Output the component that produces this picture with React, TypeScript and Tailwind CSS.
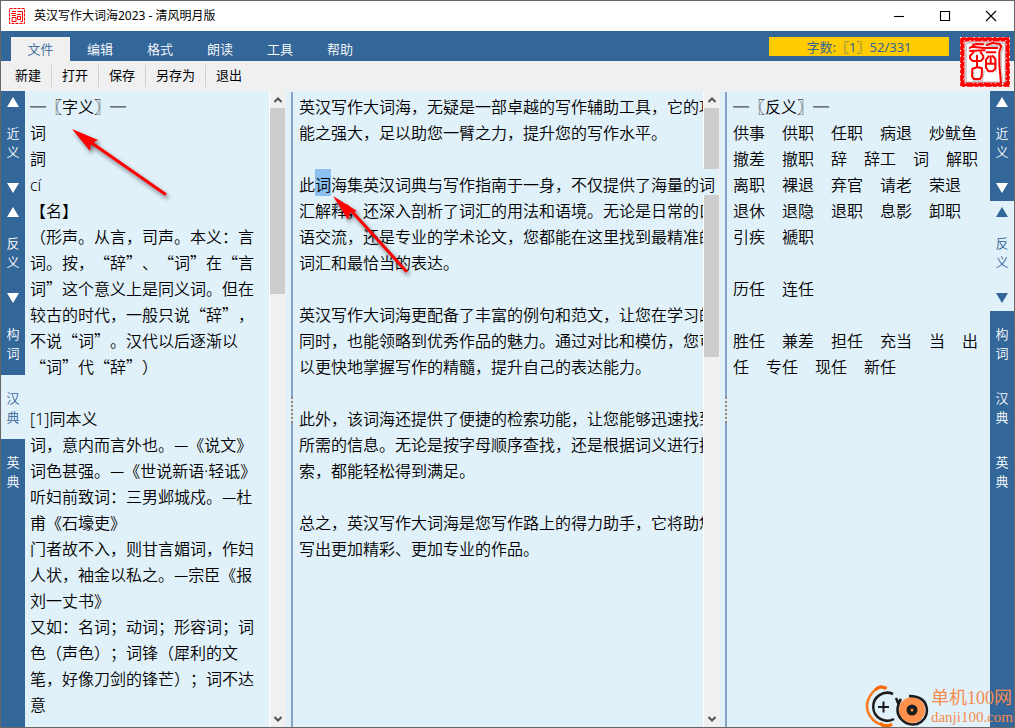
import type { ReactNode } from "react";

const menus = ["编辑", "格式", "朗读", "工具", "帮助"];
const actions = ["新建", "打开", "保存", "另存为", "退出"];

const definition = [
  "═〖字义〗═",
  "词",
  "詞",
  "cí",
  "【名】",
  "（形声。从言，司声。本义：言",
  "词。按，“辞”、“词”在“言",
  "词”这个意义上是同义词。但在",
  "较古的时代，一般只说“辞”，",
  "不说“词”。汉代以后逐渐以",
  "“词”代“辞”）",
  "",
  "[1]同本义",
  "词，意内而言外也。—《说文》",
  "词色甚强。—《世说新语·轻诋》",
  "听妇前致词：三男邺城戍。—杜",
  "甫《石壕吏》",
  "门者故不入，则甘言媚词，作妇",
  "人状，袖金以私之。—宗臣《报",
  "刘一丈书》",
  "又如：名词；动词；形容词；词",
  "色（声色）；词锋（犀利的文",
  "笔，好像刀剑的锋芒）；词不达",
  "意",
];

const article = [
  "英汉写作大词海，无疑是一部卓越的写作辅助工具，它的功",
  "能之强大，足以助您一臂之力，提升您的写作水平。",
  "",
  "此词海集英汉词典与写作指南于一身，不仅提供了海量的词",
  "汇解释，还深入剖析了词汇的用法和语境。无论是日常的口",
  "语交流，还是专业的学术论文，您都能在这里找到最精准的",
  "词汇和最恰当的表达。",
  "",
  "英汉写作大词海更配备了丰富的例句和范文，让您在学习的",
  "同时，也能领略到优秀作品的魅力。通过对比和模仿，您可",
  "以更快地掌握写作的精髓，提升自己的表达能力。",
  "",
  "此外，该词海还提供了便捷的检索功能，让您能够迅速找到",
  "所需的信息。无论是按字母顺序查找，还是根据词义进行搜",
  "索，都能轻松得到满足。",
  "",
  "总之，英汉写作大词海是您写作路上的得力助手，它将助您",
  "写出更加精彩、更加专业的作品。",
];
const activeLine = 3;

const antonyms = [
  ["供事", "供职", "任职", "病退", "炒鱿鱼"],
  ["撤差", "撤职", "辞", "辞工", "词", "解职"],
  ["离职", "裸退", "弃官", "请老", "荣退"],
  ["退休", "退隐", "退职", "息影", "卸职"],
  ["引疾", "褫职"],
  [],
  ["历任", "连任"],
  [],
  ["胜任", "兼差", "担任", "充当", "当", "出"],
  ["任", "专任", "现任", "新任"],
];

// Latin runs use a proportional face and double rules a heavier one; everything else stays full width.
function Mixed({ text }: { text: string }) {
  return (
    <>
      {text.split(/([a-zí0-9[\]·]+|═)/).map((part, i) => {
        if (part === "═") {
          return <span key={i} className="font-bold text-[#555]">{part}</span>;
        }
        return i % 2 ? (
          <span key={i} className="font-['Noto_Sans']">{part}</span>
        ) : (
          part
        );
      })}
    </>
  );
}

function Seal({ className }: { className: string }) {
  return (
    <svg className={className} viewBox="0 0 150 150" fill="none" aria-hidden="true">
      <rect width="150" height="150" fill="#fff" />
      <rect x="18" y="18" width="118" height="118" stroke="#d0d0d0" strokeWidth="6" />
      <rect x="7" y="7" width="136" height="136" stroke="#f00" strokeWidth="13" />
      <rect x="1" y="1" width="148" height="148" stroke="#fff" strokeWidth="4" strokeDasharray="4 13 3 19 5 11" />
      <rect x="11" y="11" width="128" height="128" stroke="#fff" strokeWidth="3" strokeDasharray="3 14 4 9 3 21" />
      <g transform="translate(4 4)" stroke="#ccc" strokeWidth="6">
        <path d="M78 23H116L125 28L119 48V90L124 140" />
        <path d="M36 100L38 128H62L68 98M104 66V100" />
      </g>
      <g stroke="#f00" strokeWidth="6" strokeLinecap="round" strokeLinejoin="round">
        <path d="M39 24L50 21L70 22M29 33L36 29L72 33M30 42L74 40" />
        <path d="M40 46L30 57L30 64L38 72H46M62 46L70 57L70 64L62 72H54M51 56V90" />
        <path d="M37 96L36 118L41 126H60L65 118L66 94L52 90Z" />
        <path d="M80 24L98 18L118 21L124 27L118 44L118 84L123 138" />
        <path d="M76 33H112M80 46H106" />
        <path d="M86 58L78 68V92L86 103H98L106 94V66L98 57M92 58V78M80 80H104" />
      </g>
    </svg>
  );
}

function AppIcon() {
  return (
    <svg className="size-4" viewBox="0 0 16 16" fill="none" stroke="#f00" aria-hidden="true">
      <rect x=".5" y=".5" width="15" height="15" strokeDasharray="3 1" />
      <path d="M3 3.5h4M2 5.5h5M3 7.5h4M3 9.5h4v4h-4zM8.5 3.5h5v10h-2M8 6.5h4M8.5 8.5h3v3h-3z" />
    </svg>
  );
}

function Triangle({ down = false }: { down?: boolean }) {
  return (
    <svg className="h-[10px] w-[12px]" viewBox="0 0 12 10" fill="currentColor" aria-hidden="true">
      <path d={down ? "M0 0H12L6 10Z" : "M0 10H12L6 0Z"} />
    </svg>
  );
}

function SideTabs({ active, side }: { active: string; side: string }) {
  return (
    <nav aria-label={side} className="flex w-6 shrink-0 flex-col bg-[#336699]">
      {["近义", "反义", "构词", "汉典", "英典"].map((name, i) => {
        const tone = name === active ? "bg-[#e0f1fa] text-[#336699]" : "bg-[#336699] text-white";
        const label = (
          <span className="w-[13px] text-[13px] leading-[19px] break-all">{name}</span>
        );
        return i < 2 ? (
          <div key={name} className={`flex h-[110px] shrink-0 flex-col items-center justify-between pt-[6px] pb-[8px] ${tone}`}>
            <button aria-label={`${name} 上一个`}><Triangle /></button>
            <button className="mb-[6px] flex">{label}</button>
            <button aria-label={`${name} 下一个`}><Triangle down /></button>
          </div>
        ) : (
          <button key={name} className={`flex h-16 shrink-0 items-center justify-center ${tone}`}>
            {label}
          </button>
        );
      })}
    </nav>
  );
}

function ScrollBar({ children }: { children: ReactNode }) {
  return (
    <div className="flex w-[17px] shrink-0 flex-col border-l border-white bg-[#f0f0f0] text-[#505050]">
      <button aria-label="向上滚动" className="flex h-[17px] items-center justify-center">
        <svg className="h-[6px] w-[8px]" viewBox="0 0 8 6" fill="none" stroke="currentColor" strokeWidth="2" aria-hidden="true">
          <path d="M.5 5L4 1.5L7.5 5" />
        </svg>
      </button>
      <div className="flex flex-1 flex-col">{children}</div>
      <button aria-label="向下滚动" className="flex h-[17px] items-center justify-center">
        <svg className="h-[6px] w-[8px]" viewBox="0 0 8 6" fill="none" stroke="currentColor" strokeWidth="2" aria-hidden="true">
          <path d="M.5 1L4 4.5L7.5 1" />
        </svg>
      </button>
    </div>
  );
}

function Splitter() {
  return (
    <div className="mt-px ml-[5px] flex w-[2px] shrink-0 flex-col items-center justify-center bg-[#86a4c8]">
      <div className="h-[26px] w-[2px] border-l-2 border-dotted border-[#8c8c80] bg-[#e8e4d8]" />
    </div>
  );
}

function Arrow({ className, x, y, head }: { className: string; x: number; y: number; head: string }) {
  return (
    <svg className={`pointer-events-none absolute z-20 overflow-visible drop-shadow-[2px_3px_2px_rgba(0,0,0,0.5)] ${className}`} aria-hidden="true">
      <path d={`M14 10L${x} ${y}`} stroke="#f00" strokeWidth="3" strokeLinecap="round" />
      <path d={head} fill="#f00" />
    </svg>
  );
}

function Watermark() {
  return (
    <div className="pointer-events-none absolute right-px bottom-0 z-30 flex items-center gap-[2px] font-normal text-[#f58b4c]">
      <svg className="h-[42px] w-[64px]" viewBox="0 0 64 42" fill="none" aria-hidden="true">
        <path d="M22 3Q14 0 7 8Q-2 20 5 31Q12 42 26 40" stroke="#ff7a1c" strokeWidth="2.5" />
        <path d="M10 5Q16-1 21 4M15 38Q20 44 27 39" stroke="#ff6a00" strokeWidth="3" />
        <path d="M28 9A14 14 0 1 0 29 34" stroke="#1c1c1c" strokeWidth="2.5" />
        <path d="M13 22H24M18.500 16.500V27.500" stroke="#1c1c1c" strokeWidth="2" />
        <circle cx="47" cy="25" r="13" fill="#ff914d" />
        <path d="M31 13L33 18L36 14M36 14Q29 26 36 34Q42 41 52 39Q62 35 62 25Q61 11 44 11" stroke="#1c1c1c" strokeWidth="2.500" />
        <circle cx="47" cy="25" r="5.500" fill="#1c1c1c" />
        <circle cx="47" cy="25" r="1.500" fill="#ff914d" />
      </svg>
      <div className="font-['Liberation_Serif','Noto_Sans_CJK_SC',serif]">
        <div className="text-[18px] leading-[22px]">单机100网</div>
        <div className="text-[15px] leading-[16px]">danji100.com</div>
      </div>
    </div>
  );
}

export default function App() {
  return (
    <div className="relative flex h-screen flex-col overflow-hidden border border-[#666] bg-[#e0f1fa] font-['Noto_Sans_CJK_SC',sans-serif] text-[13px] font-[350] text-black [text-spacing-trim:space-all]">
      <header className="flex h-[30px] shrink-0 items-center bg-white pl-2">
        <AppIcon />
        <h1 className="flex-1 pl-[9px] font-['Noto_Sans','Noto_Sans_CJK_SC',sans-serif] text-[12px] font-normal">英汉写作大词海2023 - 清风明月版</h1>
        <div className="flex">
          {[
            ["最小化", "M0 5.5H10"],
            ["最大化", "M.5 .5H9.500V9.500H.5Z"],
            ["关闭", "M0 0L10 10M10 0L0 10"],
          ].map(([name, d]) => (
            <button key={name} aria-label={name} className="flex h-[30px] w-[46px] items-center justify-center">
              <svg className="size-[10px] overflow-visible" viewBox="0 0 10 10" fill="none" stroke="#000" strokeWidth="1.100" aria-hidden="true">
                <path d={d} />
              </svg>
            </button>
          ))}
        </div>
      </header>

      <div className="relative shrink-0">
        <div className="flex h-[30px] items-end bg-[#336699] pl-[10px] text-white">
          <nav aria-label="菜单" className="flex flex-1">
            <button className="h-6 w-[59px] bg-[#f0f0f0] pb-px text-[#336699]">文件</button>
            {menus.map((m) => (
              <button key={m} className="h-6 w-[60px] pb-px">{m}</button>
            ))}
          </nav>
          <div className="mr-[65px] mb-[5px] h-[19px] w-[180px] bg-[#ffcc00] text-center leading-[19px] font-normal text-[#336699]">
            字数:〖<Mixed text="1" />〗<span className="font-['Noto_Sans']">52/331</span>
          </div>
        </div>
        <div className="flex h-[30px] items-center bg-[#f0f0f0] pl-1 font-normal">
          {actions.map((a, i) => (
            <button key={a} className={`h-[22px] px-[10px] pb-[2px] leading-[20px] ${i ? "border-l border-[#d0d0d0]" : ""}`}>{a}</button>
          ))}
        </div>
        <Seal className="absolute top-[6px] right-[4px] size-[50px]" />
      </div>

      <main className="relative flex min-h-0 flex-1 text-[16px]">
        <SideTabs active="汉典" side="左侧词典" />
        <section aria-label="字义" className="w-[244px] shrink-0 overflow-hidden pl-[5px] whitespace-pre">
          {definition.map((line, i) => (
            <p key={i} className="h-[26px] leading-[30px]"><Mixed text={line} /></p>
          ))}
        </section>
        <ScrollBar>
          <div className="h-[186px] w-[15px] bg-[#cdcdcd]" />
        </ScrollBar>
        <Splitter />
        <div role="textbox" aria-label="正文" aria-multiline="true" tabIndex={0} className="min-w-0 flex-1 whitespace-pre outline-none">
          {article.map((line, i) =>
            i === activeLine ? (
              <p key={i} className="relative z-10 -mr-4 h-[26px] bg-[#e0f1fa] pl-[6px] leading-[30px]">
                {line.slice(0, 1)}
                <mark className="bg-[#8cc0ee] pt-[3px] text-black">{line.slice(1, 2)}</mark>
                {line.slice(2)}
              </p>
            ) : (
              <p key={i} className="h-[26px] overflow-x-clip pl-[6px] leading-[30px]">{line}</p>
            ),
          )}
        </div>
        <ScrollBar>
          <div className="h-[249px] w-[15px] bg-[#cdcdcd]" />
        </ScrollBar>
        <Splitter />
        <section aria-label="反义" className="w-[263px] shrink-0 overflow-hidden pl-[6px] whitespace-nowrap">
          <p className="h-[26px] leading-[30px]"><Mixed text="═〖反义〗═" /></p>
          {antonyms.map((row, i) => (
            <div key={i} className="flex h-[26px] gap-[17px] leading-[30px]">
              {row.map((w) => <span key={w}>{w}</span>)}
            </div>
          ))}
        </section>
        <SideTabs active="反义" side="右侧词典" />
        <Arrow className="top-[38px] left-[71px] h-[70px] w-[96px]" x={93} y={65} head="M0 0L26 11L19 15L18 22Z" />
        <Arrow className="top-[105px] left-[332px] h-[80px] w-[76px]" x={73} y={75} head="M0 0L24 15L17 17L15 24Z" />
      </main>
      <Watermark />
    </div>
  );
}
